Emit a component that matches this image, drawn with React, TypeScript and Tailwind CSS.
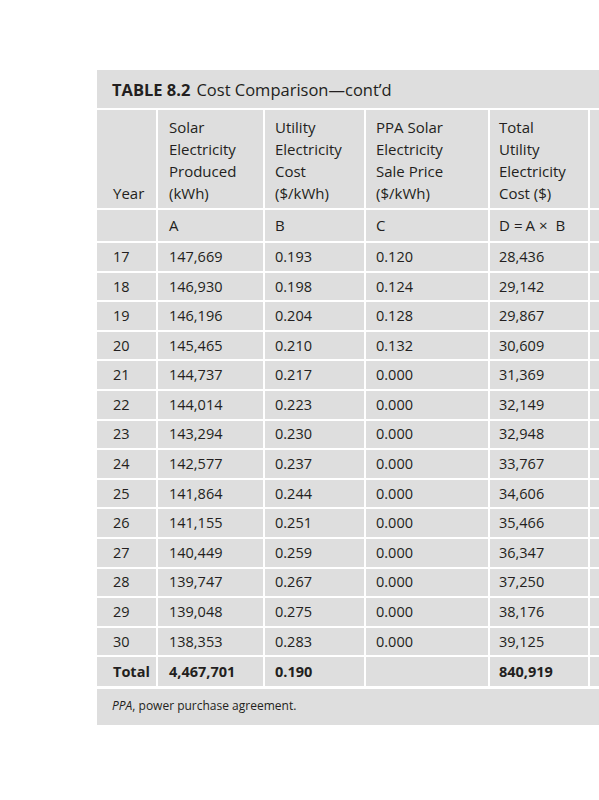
import React from "react";

const rows: [string, string, string, string, string][] = [
  ["17", "147,669", "0.193", "0.120", "28,436"],
  ["18", "146,930", "0.198", "0.124", "29,142"],
  ["19", "146,196", "0.204", "0.128", "29,867"],
  ["20", "145,465", "0.210", "0.132", "30,609"],
  ["21", "144,737", "0.217", "0.000", "31,369"],
  ["22", "144,014", "0.223", "0.000", "32,149"],
  ["23", "143,294", "0.230", "0.000", "32,948"],
  ["24", "142,577", "0.237", "0.000", "33,767"],
  ["25", "141,864", "0.244", "0.000", "34,606"],
  ["26", "141,155", "0.251", "0.000", "35,466"],
  ["27", "140,449", "0.259", "0.000", "36,347"],
  ["28", "139,747", "0.267", "0.000", "37,250"],
  ["29", "139,048", "0.275", "0.000", "38,176"],
  ["30", "138,353", "0.283", "0.000", "39,125"],
];

const cols = "grid grid-cols-[59px_105px_99px_122px_98px_40px] gap-x-[2px]";
const cellPad = ["pl-[16px]", "pl-[11px]", "pl-[10px]", "pl-[10px]", "pl-[9px]", ""];

const formula = (
  <span className="flex items-baseline">
    <span>D</span>
    <span className="ml-[4px]">=</span>
    <span className="ml-[3px]">A</span>
    <span className="ml-[4px]">×</span>
    <span className="ml-[8px]">B</span>
  </span>
);

export default function App() {
  return (
    <div
      className="w-[599px] h-[800px] overflow-hidden bg-white text-[#231f20]"
      style={{ fontFamily: '"Open Sans", "Noto Sans", sans-serif' }}
    >
      <div className="pt-[70px] pl-[97px]">
        <div className="w-[600px] flex flex-col gap-y-[2px]">
          <div className="h-[38px] bg-[#dedede] flex items-center pl-[15px] text-[16.5px] pt-[2px]">
            <span className="font-bold">TABLE 8.2</span>
            <span className="ml-[6px]">Cost Comparison—cont’d</span>
          </div>
          <div className={`${cols} h-[98px] text-[15px] leading-[22px]`}>
            {[
              ["Year"],
              ["Solar", "Electricity", "Produced", "(kWh)"],
              ["Utility", "Electricity", "Cost", "($/kWh)"],
              ["PPA Solar", "Electricity", "Sale Price", "($/kWh)"],
              ["Total", "Utility", "Electricity", "Cost ($)"],
              [],
            ].map((lines, i) => (
              <div key={i} className={`bg-[#dedede] flex flex-col justify-end pb-[4px] ${cellPad[i]}`}>
                {lines.map((l) => (
                  <div key={l}>{l}</div>
                ))}
              </div>
            ))}
          </div>
          <div className={`${cols} h-[31px] text-[15px]`}>
            {["", "A", "B", "C", "F", ""].map((t, i) => (
              <div key={i} className={`bg-[#dedede] flex items-center ${cellPad[i]}`}>
                {t === "F" ? formula : t}
              </div>
            ))}
          </div>
          {rows.map((r) => (
            <div key={r[0]} className={`${cols} h-[27.6px] text-[14.5px]`}>
              {[...r, ""].map((t, i) => (
                <div key={i} className={`bg-[#dedede] flex items-center ${cellPad[i]}`}>
                  {t}
                </div>
              ))}
            </div>
          ))}
          <div className={`${cols} h-[29px] text-[14.5px] font-bold`}>
            {["Total", "4,467,701", "0.190", "", "840,919", ""].map((t, i) => (
              <div key={i} className={`bg-[#dedede] flex items-center ${cellPad[i]}`}>
                {t}
              </div>
            ))}
          </div>
          <div className="h-[36px] mt-[1px] bg-[#dedede] flex items-center pl-[15px] pb-[2px] text-[12px]">
            <span>
              <i>PPA</i>, power purchase agreement.
            </span>
          </div>
        </div>
      </div>
    </div>
  );
}
